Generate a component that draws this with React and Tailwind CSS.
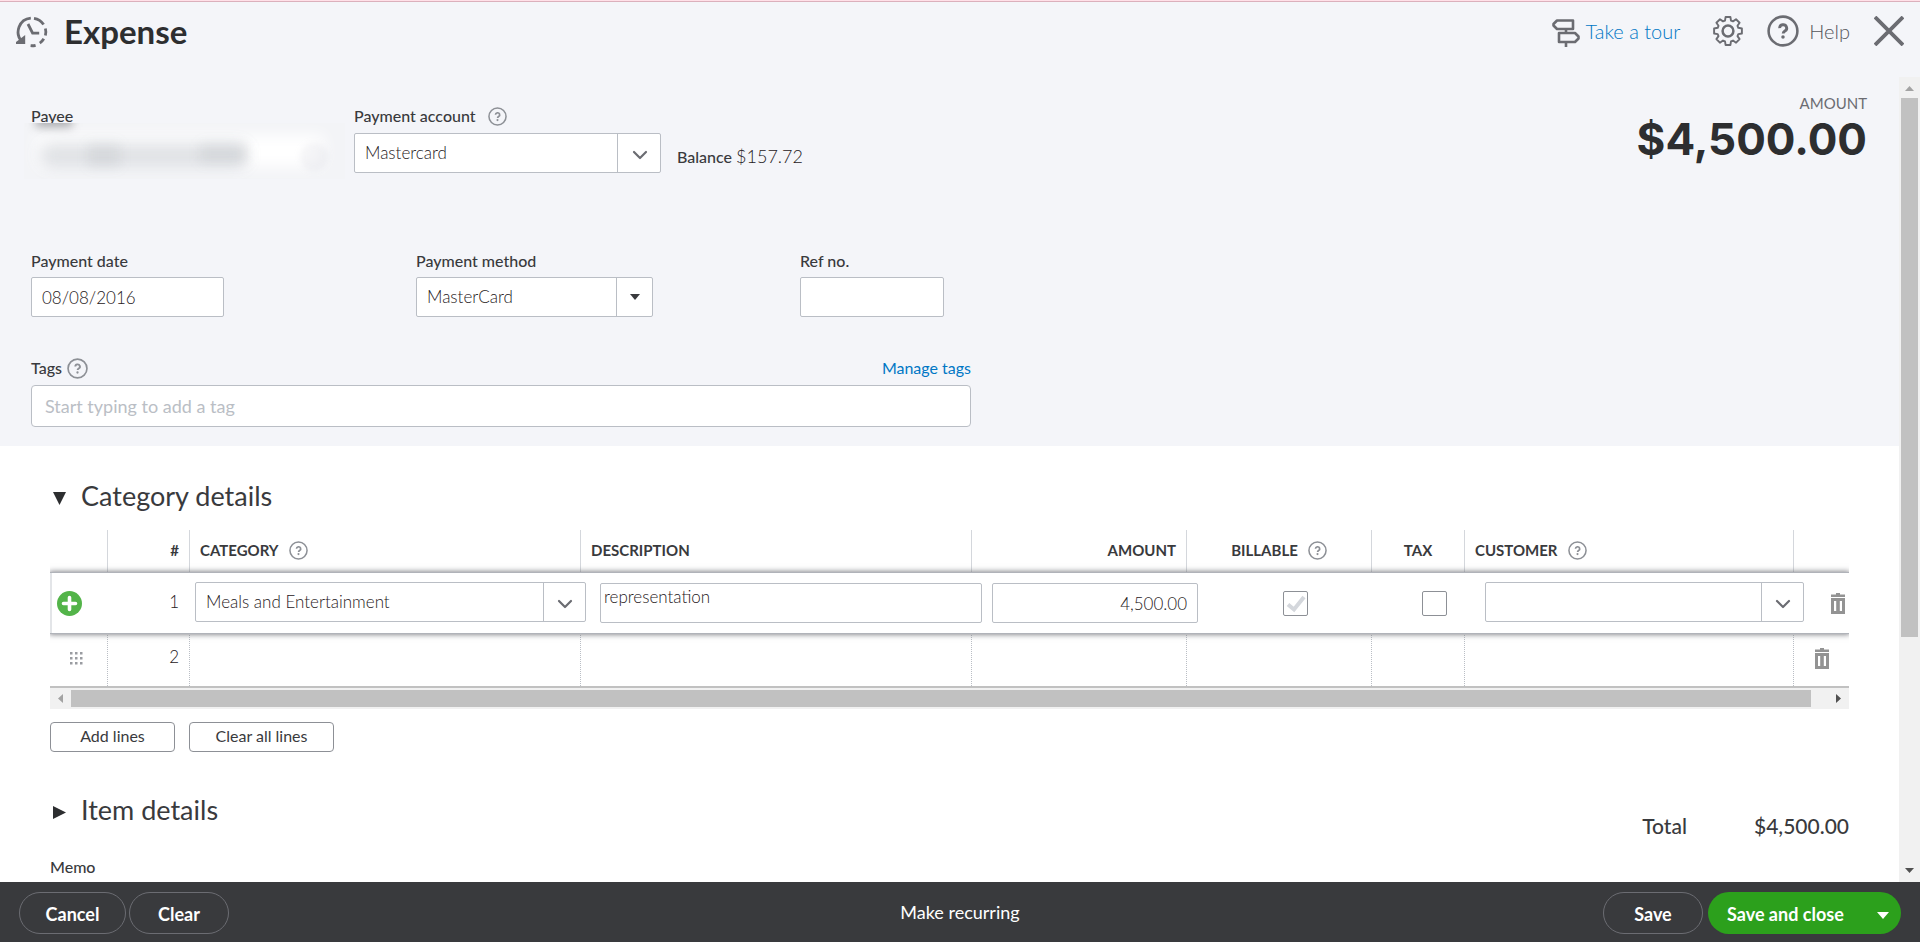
import React from 'react';
import { ChevronDown } from 'lucide-react';

function HelpCircle({ className }) {
    return (
        <svg viewBox="0 0 20 20" className={className} fill="none" stroke="currentColor" aria-hidden="true">
            <circle cx="10" cy="10" r="9" strokeWidth="1.6" />
            <path d="M7.9 8.2a2.2 2.1 0 1 1 3.3 1.8c-.8.5-1.1.8-1.1 1.5" strokeWidth="1.8" />
            <circle cx="10" cy="13.8" r="1.1" fill="currentColor" stroke="none" />
        </svg>
    );
}

function HistoryIcon() {
    return (
        <svg viewBox="0 0 32 32" className="w-8 h-8 text-[#6b6c72]" fill="none" stroke="currentColor" strokeWidth="2.8" aria-hidden="true">
            <path d="M14.8 2.2A13.8 13.8 0 0 0 6 25.5" />
            <path d="M18 2.3a13.8 13.8 0 0 1 9.6 6.3M29.4 12.5a13.8 13.8 0 0 1 0 7M27.8 22.8a13.8 13.8 0 0 1-4 4.3M19.6 29.3a13.8 13.8 0 0 1-5 .4" />
            <path d="M0 28h9.2v-9L0 26z" fill="currentColor" stroke="none" />
            <path d="M12 8l4.6 9.2h6.6" />
        </svg>
    );
}

function SignpostIcon() {
    return (
        <svg viewBox="0 0 28 28" className="mt-1 w-7 h-7 text-[#6b6c72]" fill="none" stroke="currentColor" strokeWidth="2.6" strokeLinejoin="round" aria-hidden="true">
            <path d="M5 1.5h16V10H5L1.5 6.5V5zM7 14h16l3.5 3.5v2L23 23H7zM14 10v4M14 23v5" />
        </svg>
    );
}

function GearIcon() {
    return (
        <svg viewBox="0 0 30 30" className="w-[30px] h-[30px] text-[#6b6c72]" fill="none" stroke="currentColor" strokeWidth="1.9" strokeLinejoin="round" aria-hidden="true">
            <circle cx="15" cy="15" r="5.4" strokeWidth="2.5" />
            <path d="M12.6 1h4.8l.6 3.6 2 .8 3-2.1 3.6 3.5-2.1 3 .8 2 3.6.7v5l-3.6.6-.8 2 2.1 3-3.5 3.6-3.1-2.2-2 .9-.6 3.6h-4.8l-.6-3.6-2-.9-3.1 2.2-3.5-3.6 2.1-3-.8-2-3.6-.6v-5l3.6-.7.8-2-2.1-3 3.6-3.5 3 2.1 2-.8z" />
        </svg>
    );
}

function TrashIcon({ className }) {
    return (
        <svg viewBox="0 0 14 21" className={className} fill="none" aria-hidden="true">
            <path d="M5 0h4v1.5h5V4H0V1.5h5z" fill="#939393" />
            <path d="M0 5h14v16H0zM3 8v10h2.2V8zM8.8 8v10H11V8z" fill="#939393" fillRule="evenodd" />
        </svg>
    );
}

function Select({ id, label, value, arrow = 'chevron', className = '', panel = 'w-11' }) {
    return (
        <div className={`relative h-10 ${className}`}>
            <select
                id={id}
                aria-label={label}
                defaultValue={value}
                className="w-full h-full appearance-none rounded-xs border border-[#babec5] bg-white pl-[10px] pr-12 text-[17px] font-light text-[#1f2022]"
            >
                <option>{value}</option>
            </select>
            <span className={`pointer-events-none absolute inset-y-0 right-0 flex items-center justify-center border-l border-[#babec5] text-[#6b6c72] ${panel}`}>
                {arrow === 'chevron' ? (
                    <ChevronDown className="w-6 h-6 mt-1" strokeWidth={2.2} />
                ) : (
                    <svg viewBox="0 0 10 6" className="w-[10px] h-[6px]" fill="#393a3d"><path d="M0 0h10L5 6z" /></svg>
                )}
            </span>
        </div>
    );
}

function Payee() {
    return (
        <div className="w-[323px]">
            <label htmlFor="payee" className="block h-8 text-base leading-[30px] font-medium">Payee</label>
            <div className="relative -ml-[7px] -mt-[10px] h-14 w-[321px] overflow-hidden bg-[#f3f4f7]">
                <input id="payee" className="absolute left-3 top-3 h-8 w-72 bg-white blur-[8px]" />
                <span className="absolute left-3 -top-2 h-3 w-9 bg-[#393a3d]/40 blur-[5px]" />
                <span className="absolute left-4 top-5 h-6 w-52 rounded-full bg-gray-500/20 blur-[7px]" />
                <span className="absolute left-16 top-5 h-6 w-8 bg-gray-500/10 blur-[6px]" />
                <span className="absolute left-44 top-5 h-5 w-12 bg-gray-500/10 blur-[6px]" />
                <span className="absolute left-[276px] top-5 size-7 rounded-full bg-gray-400/10 blur-[3px]" />
            </div>
        </div>
    );
}

function Header() {
    return (
        <header className="border-t border-[#ffe0e8] bg-[#f4f5f9]">
            <div className="flex h-[76px] items-start justify-between border-t border-[#dbb0bc] px-4">
                <div className="flex items-start gap-4 pt-2">
                    <span className="pt-[6px]"><HistoryIcon /></span>
                    <h1 className="text-[33px] leading-[42px] font-bold text-[#2d2e30]">Expense</h1>
                </div>
                <div className="flex h-[58px] items-center text-[#6b6c72]">
                    <a href="#tour" className="flex items-center gap-[6px] text-xl font-light text-[#0077c5]">
                        <SignpostIcon />
                        Take a tour
                    </a>
                    <button aria-label="Settings" className="ml-[33px]"><GearIcon /></button>
                    <button className="ml-6 flex items-center gap-[10px] text-xl font-light text-[#55565b]">
                        <HelpCircle className="w-8 h-8 text-[#6b6c72]" />
                        Help
                    </button>
                    <button aria-label="Close" className="ml-6">
                        <svg viewBox="0 0 30 30" className="w-[30px] h-[30px]" stroke="currentColor" strokeWidth="3.8"><path d="M1 1l28 28M29 1L1 29" /></svg>
                    </button>
                </div>
            </div>
        </header>
    );
}

function ExpenseForm() {
    return (
        <section className="h-[369px] bg-[#f4f5f9] pl-[31px] pr-8">
            <div className="flex justify-between">
                <div className="flex pt-6">
                    <Payee />
                    <div className="w-[307px]">
                        <div className="flex h-8 items-center gap-3 pb-[2px]">
                            <label htmlFor="account" className="text-base font-medium">Payment account</label>
                            <HelpCircle className="w-[19px] h-[19px] text-[#8d9096]" />
                        </div>
                        <Select id="account" value="Mastercard" />
                    </div>
                    <p className="ml-4 pt-[43px] text-base leading-6 font-medium">
                        Balance <span className="text-lg leading-6 font-light text-[#1f2022]">$157.72</span>
                    </p>
                </div>
                <div className="pt-[17px] text-right">
                    <p className="h-5 text-[15px] leading-[18px] text-[#6b6c72]">AMOUNT</p>
                    <p className="font-['Inter',sans-serif] text-[44px] leading-[50px] font-bold text-[#2d2e30]">$4,500.00</p>
                </div>
            </div>

            <div className="mt-[66px] flex">
                <div className="w-[385px]">
                    <label htmlFor="date" className="block text-base leading-8 font-medium">Payment date</label>
                    <input id="date" defaultValue="08/08/2016" className="h-10 w-[193px] rounded-xs border border-[#babec5] bg-white px-[10px] text-[17px] font-light text-[#1f2022]" />
                </div>
                <div className="w-96">
                    <label htmlFor="method" className="block text-base leading-8 font-medium">Payment method</label>
                    <Select id="method" value="MasterCard" arrow="triangle" panel="w-[37px]" className="w-[237px]" />
                </div>
                <div>
                    <label htmlFor="ref" className="block text-base leading-8 font-medium">Ref no.</label>
                    <input id="ref" className="h-10 w-36 rounded-xs border border-[#babec5] bg-white px-[10px]" />
                </div>
            </div>

            <div className="mt-[34px] w-[940px]">
                <div className="flex h-[34px] items-center gap-[5px]">
                    <label htmlFor="tags" className="text-base font-medium">Tags</label>
                    <HelpCircle className="w-[21px] h-[21px] text-[#8d9096]" />
                    <a href="#tags" className="ml-auto text-base text-[#0077c5]">Manage tags</a>
                </div>
                <input id="tags" placeholder="Start typing to add a tag" className="h-[42px] w-full rounded-sm border border-[#babec5] bg-white px-[13px] text-lg placeholder:text-[#babec5]" />
            </div>
        </section>
    );
}

const TH = 'border-l border-[#d4d7dc] px-[10px] pb-[2px] text-[15px] font-bold';
const EMPTY = 'border-l border-dotted border-[#babec5]';

function CategoryTable() {
    return (
        <div className="overflow-hidden">
            <table className="w-full table-fixed border-separate border-spacing-0 border-b-2 border-[#c1c1c1]">
                <colgroup>
                    <col className="w-[57px]" />
                    <col className="w-[82px]" />
                    <col />
                    <col />
                    <col className="w-[215px]" />
                    <col className="w-[185px]" />
                    <col className="w-[93px]" />
                    <col className="w-[329px]" />
                    <col className="w-14" />
                </colgroup>
                <thead>
                    <tr className="h-[43px] text-left">
                        <th></th>
                        <th className={`${TH} text-right`}>#</th>
                        <th className={TH}>
                            <span className="flex items-center gap-[10px]">CATEGORY <HelpCircle className="w-[19px] h-[19px] text-[#8d9096]" /></span>
                        </th>
                        <th className={TH}>DESCRIPTION</th>
                        <th className={`${TH} text-right`}>AMOUNT</th>
                        <th className={TH}>
                            <span className="flex items-center justify-center gap-[10px]">BILLABLE <HelpCircle className="w-[19px] h-[19px] text-[#8d9096]" /></span>
                        </th>
                        <th className={`${TH} text-center`}>TAX</th>
                        <th className={TH}>
                            <span className="flex items-center gap-[10px]">CUSTOMER <HelpCircle className="w-[19px] h-[19px] text-[#8d9096]" /></span>
                        </th>
                        <th className={TH}></th>
                    </tr>
                </thead>
                <tbody className="text-[17px] font-light text-[#1f2022]">
                    <tr className="relative h-[60px] bg-white shadow-[0_0_0_1px_#b0b3b9,0_0_6px_1px_#6b6c72]">
                        <td className="border-l-2 border-[#e3e5e8] pl-[5px]">
                            <button aria-label="Add line" className="block">
                                <svg viewBox="0 0 25 25" className="w-[25px] h-[25px]">
                                    <circle cx="12.5" cy="12.5" r="12.5" fill="#53b449" />
                                    <path d="M12.5 6.5v12M6.5 12.5h12" stroke="#fff" strokeWidth="3.6" strokeLinecap="round" />
                                </svg>
                            </button>
                        </td>
                        <td className="pr-[10px] pb-[2px] text-right">1</td>
                        <td className="pb-[2px] pl-[6px]">
                            <Select label="Category" value="Meals and Entertainment" className="-mr-[6px]" panel="w-[43px]" />
                        </td>
                        <td className="pl-5">
                            <div className="-mr-[11px]">
                                <textarea aria-label="Description" defaultValue="representation" className="block h-10 w-full resize-none rounded-xs border border-[#babec5] px-[3px]" />
                            </div>
                        </td>
                        <td className="pl-[21px]">
                            <div className="-mr-3">
                                <input aria-label="Amount" defaultValue="4,500.00" className="block h-10 w-full rounded-xs border border-[#babec5] px-[10px] text-right" />
                            </div>
                        </td>
                        <td className="pl-[97px]">
                            <span className="grid w-[25px]">
                                <input type="checkbox" aria-label="Billable" disabled defaultChecked className="col-start-1 row-start-1 size-[25px] appearance-none rounded-xs border border-[#8d9096]" />
                                <svg viewBox="0 0 25 25" className="col-start-1 row-start-1 size-[25px]" fill="none" stroke="#d4d7dc" strokeWidth="4"><path d="M5 13.5l6 5L21 6" /></svg>
                            </span>
                        </td>
                        <td className="pl-[51px]">
                            <input type="checkbox" aria-label="Tax" className="block size-[25px] appearance-none rounded-xs border border-[#8d9096]" />
                        </td>
                        <td className="pb-[2px] pl-[21px]">
                            <Select label="Customer" value="" className="-mr-[11px]" panel="w-[43px]" />
                        </td>
                        <td className="pl-[38px]">
                            <button aria-label="Delete line 1" className="block"><TrashIcon className="w-[14px] h-[21px]" /></button>
                        </td>
                    </tr>
                    <tr className="h-[53px]">
                        <td className="pb-[2px] pl-5">
                            <svg viewBox="0 0 13 13" className="size-[13px]" fill="#9a9ca1">
                                {[0, 5, 10].map((y) => [0, 5, 10].map((x) => <rect key={`${x}-${y}`} x={x} y={y} width="2.5" height="2.5" />))}
                            </svg>
                        </td>
                        <td className={`${EMPTY} pr-[10px] pb-[6px] text-right`}>2</td>
                        <td className={EMPTY}></td>
                        <td className={EMPTY}></td>
                        <td className={EMPTY}></td>
                        <td className={EMPTY}></td>
                        <td className={EMPTY}></td>
                        <td className={EMPTY}></td>
                        <td className={`${EMPTY} pb-[2px] pl-[21px]`}>
                            <button aria-label="Delete line 2" className="block"><TrashIcon className="w-[14px] h-[21px]" /></button>
                        </td>
                    </tr>
                </tbody>
            </table>
            <div className="flex h-[21px] items-center bg-[#f1f1f1]">
                <svg viewBox="0 0 21 21" className="size-[21px]" fill="#a3a3a3"><path d="M13 6v9l-5-4.5z" /></svg>
                <span className="h-[17px] flex-1 bg-[#c1c1c1]" />
                <svg viewBox="0 0 38 21" className="w-[38px] h-[21px]" fill="#505050"><path d="M25 6v9l5-4.5z" /></svg>
            </div>
        </div>
    );
}

function PageScrollbar() {
    return (
        <div className="flex w-[21px] flex-col items-center bg-[#f1f1f1]">
            <svg viewBox="0 0 21 21" className="size-[21px]" fill="#a3a3a3"><path d="M6 14h9l-4.5-5z" /></svg>
            <span className="h-[67%] w-[17px] bg-[#c1c1c1]" />
            <svg viewBox="0 0 21 21" className="mt-auto size-[21px]" fill="#505050"><path d="M6 7h9l-4.5 5z" /></svg>
        </div>
    );
}

function Footer() {
    const pill = 'h-[42px] rounded-full border border-[#6b6c72] pt-[2px] text-lg font-bold';
    return (
        <footer className="grid h-[60px] grid-cols-3 items-center bg-[#393a3d] px-[19px] text-white">
            <div className="flex gap-[3px] pt-[2px]">
                <button className={`${pill} w-[107px]`}>Cancel</button>
                <button className={`${pill} w-[100px]`}>Clear</button>
            </div>
            <button className="text-lg">Make recurring</button>
            <div className="flex justify-end gap-[5px] pt-[2px]">
                <button className={`${pill} w-[100px]`}>Save</button>
                <div className="flex h-[42px] w-[193px] rounded-full bg-[#2ca01c]">
                    <button className="flex-1 pt-[2px] pl-[19px] text-left text-lg font-bold">Save and close</button>
                    <button aria-label="More save options" className="flex w-[35px] items-center justify-center pt-1">
                        <svg viewBox="0 0 12 7" className="w-3 h-[7px]" fill="#fff"><path d="M0 0h12L6 7z" /></svg>
                    </button>
                </div>
            </div>
        </footer>
    );
}

export default function App() {
    const lineButton = 'h-[30px] rounded-sm border border-[#8d9096] pb-[3px] text-base';
    return (
        <div className="flex h-screen flex-col bg-white font-['Lato',sans-serif] text-[#393a3d]">
            <Header />
            <div className="flex min-h-0 flex-1">
                <main className="min-w-0 flex-1 overflow-hidden">
                    <ExpenseForm />
                    <section className="px-[50px]">
                        <h2 className="flex items-center gap-[15px] pt-[30px] pb-[14px] text-[27px] leading-10">
                            <svg viewBox="0 0 13 13" className="ml-[3px] mt-1 size-[13px]" fill="#2d2e30"><path d="M0 0h13L6.5 13z" /></svg>
                            Category details
                        </h2>
                        <CategoryTable />
                        <div className="mt-[13px] flex gap-[14px]">
                            <button className={`${lineButton} w-[125px]`}>Add lines</button>
                            <button className={`${lineButton} w-[145px]`}>Clear all lines</button>
                        </div>
                        <div className="mt-[38px] flex justify-between">
                            <h2 className="flex h-10 items-center gap-[15px] text-[27px] leading-10">
                                <svg viewBox="0 0 13 13" className="ml-[3px] mt-1 size-[13px]" fill="#2d2e30"><path d="M0 0v13L13 6.5z" /></svg>
                                Item details
                            </h2>
                            <p className="flex gap-[67px] pt-[22px] text-[21px] leading-7 font-medium">
                                <span>Total</span>
                                <span>$4,500.00</span>
                            </p>
                        </div>
                        <p className="mt-[15px] text-base leading-6 font-medium">Memo</p>
                    </section>
                </main>
                <PageScrollbar />
            </div>
            <Footer />
        </div>
    );
}
